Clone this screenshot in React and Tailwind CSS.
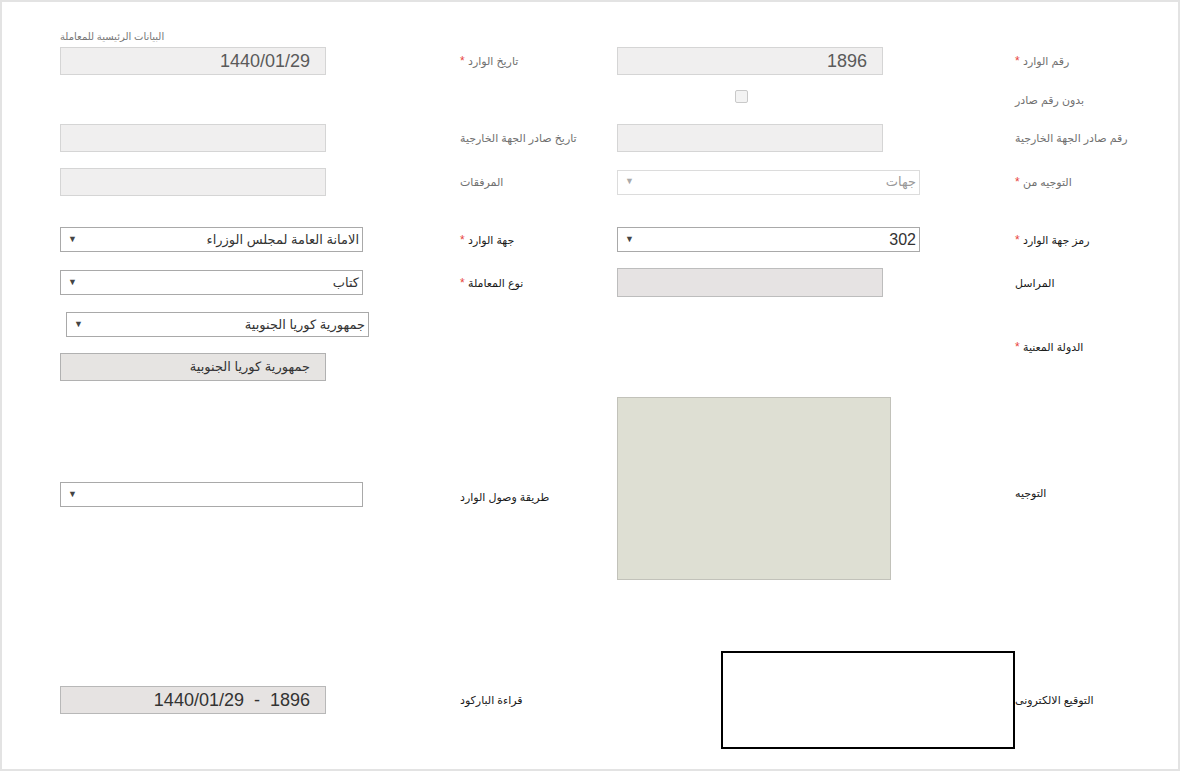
import React from "react";

const font = "font-['Liberation_Sans','DejaVu_Sans',sans-serif]";

const Label = ({ text, required, dark, className = "" }) => (
  <span
    className={`text-[11px] leading-[14px] whitespace-nowrap ${dark ? "text-[#1a1a1a]" : "text-[#707070]"} ${className}`}
  >
    {text}
    {required && <span className="text-[#e8453c] text-[12px]"> *</span>}
  </span>
);

const TextBox = ({ value, className = "" }) => (
  <div
    className={`w-[266px] h-[28px] bg-[#f0efef] border border-[#d5d5d5] flex items-center pr-[15px] text-[18px] text-[#5a5a5a] ${className}`}
  >
    {value}
  </div>
);

const Select = ({ value, muted, big, className = "" }) => (
  <div
    className={`h-[25px] bg-white border flex items-center justify-between pr-[3px] pl-[7px] ${
      muted ? "border-[#dcdcdc]" : "border-[#a9a9a9]"
    } ${className}`}
  >
    <span
      className={`${big ? "text-[16px]" : "text-[13px]"} ${
        muted ? "text-[#999]" : "text-[#333]"
      } whitespace-nowrap`}
    >
      {value}
    </span>
    <span className={`text-[9px] ${muted ? "text-[#aaa]" : "text-[#444]"}`}>▼</span>
  </div>
);

// cells are listed right to left: label, field, label, field
const Row = ({ className = "", a, b, c, d, bClass = "justify-end" }) => (
  <div className={`flex ${className}`}>
    <div className="w-[163px] flex items-center justify-end">{a}</div>
    <div className={`w-[398px] flex items-center ${bClass}`}>{b}</div>
    <div className="w-[157px] flex items-center justify-end">{c}</div>
    <div className="w-[400px] flex items-center justify-end">{d}</div>
  </div>
);

export default function App() {
  return (
    <div dir="rtl" className={`${font} w-[1180px] h-[771px] bg-white border-2 border-[#e3e3e3] flex flex-col`}>
      <Row
        className="mt-[28px] h-[14px]"
        d={<span className="text-[10px] leading-[14px] text-[#777]">البيانات الرئيسية للمعاملة</span>}
      />
      <Row
        className="mt-[3px] h-[28px]"
        a={<Label text="رقم الوارد" required />}
        b={<TextBox value="1896" />}
        c={<Label text="تاريخ الوارد" required />}
        d={<TextBox value="1440/01/29" />}
      />
      <Row
        className="mt-[10px] h-[22px]"
        a={<Label text="بدون رقم صادر" className="pt-[8px]" />}
        b={<div className="w-[13px] h-[13px] border border-[#c9c9c9] rounded-[2px] bg-[#f3f3f3] ml-[118px]" />}
      />
      <Row
        className="mt-[17px] h-[28px]"
        a={<Label text="رقم صادر الجهة الخارجية" />}
        b={<TextBox value="" />}
        c={<Label text="تاريخ صادر الجهة الخارجية" />}
        d={<TextBox value="" />}
      />
      <Row
        className="mt-[16px] h-[28px]"
        a={<Label text="التوجيه من" required />}
        b={<Select value="جهات" muted className="w-[303px] h-[24px]" />}
        c={<Label text="المرفقات" />}
        d={<TextBox value="" />}
      />
      <Row
        className="mt-[31px] h-[25px]"
        a={<Label text="رمز جهة الوارد" required dark />}
        b={<Select value="302" big className="w-[303px]" />}
        c={<Label text="جهة الوارد" required dark />}
        d={<Select value="الامانة العامة لمجلس الوزراء" className="w-[303px]" />}
      />
      <Row
        className="mt-[16px] h-[29px]"
        a={<Label text="المراسل" dark />}
        b={<div className="w-[266px] h-[29px] bg-[#e6e3e3] border border-[#bdbdbd]" />}
        c={<Label text="نوع المعاملة" required dark />}
        d={<Select value="كتاب" className="w-[303px]" />}
      />
      <Row
        className="mt-[15px] h-[69px]"
        a={<Label text="الدولة المعنية" required dark />}
        d={
          <div className="flex flex-col items-end">
            <Select value="جمهورية كوريا الجنوبية" className="w-[303px] ml-[6px]" />
            <div className="mt-[16px] w-[266px] h-[28px] bg-[#e6e4e2] border border-[#b1b1b1] flex items-center pr-[15px] text-[13px] text-[#333]">
              جمهورية كوريا الجنوبية
            </div>
          </div>
        }
      />
      <Row
        className="mt-[16px] h-[183px]"
        a={<Label text="التوجيه" dark className="pt-[8px]" />}
        b={<div className="w-[274px] h-[183px] bg-[#dedfd3] border border-[#c2c2ba]" />}
        c={<Label text="طريقة وصول الوارد" dark className="pt-[16px]" />}
        d={<Select value="" className="w-[303px] mt-[12px]" />}
      />
      <Row
        className="mt-[71px] h-[98px]"
        a={<Label text="التوقيع الالكترونى" dark className="-mr-[1px]" />}
        b={<div className="w-[294px] h-[98px] border-2 border-black bg-white" />}
        bClass="justify-start"
        c={<Label text="قراءة الباركود" dark />}
        d={
          <div className="w-[266px] h-[28px] bg-[#e6e3e2] border border-[#b8b8b8] flex items-center pr-[15px] text-[18px] text-[#333]">
            <span dir="ltr" className="whitespace-pre">1440/01/29  -  1896</span>
          </div>
        }
      />
    </div>
  );
}
